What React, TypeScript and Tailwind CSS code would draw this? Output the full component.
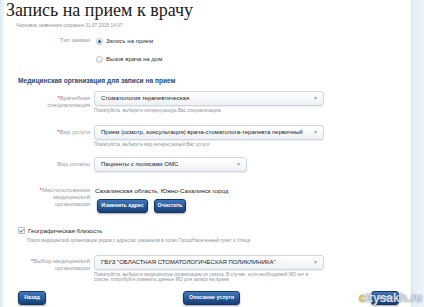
import { Check } from 'lucide-react';

const Arrow = () => (
    <span className="ml-auto pr-[5px] text-[5px] leading-none text-[#9aa3ad]">▼</span>
);

function Select({ text, width }: { text: string; width: string }) {
    return (
        <div className={`${width} h-[15px] flex items-center pl-[6px] rounded-[3px] border border-[#cfd6de] bg-gradient-to-b from-white to-[#eef1f4] shadow-[0_1px_1px_rgba(0,0,0,0.08)]`}>
            <span className="text-[6px] text-[#222] whitespace-nowrap">{text}</span>
            <Arrow />
        </div>
    );
}

function Btn({ label, className = '' }: { label: string; className?: string }) {
    return (
        <div className={`h-[14px] flex items-center justify-center rounded-[3px] bg-gradient-to-b from-[#3f78bb] to-[#173f77] border border-[#143766] shadow-[0_1px_2px_rgba(0,0,0,0.35)] text-white font-bold text-[5.3px] ${className}`}>
            {label}
        </div>
    );
}

function Label({ lines, req }: { lines: string[]; req?: boolean }) {
    return (
        <div className="w-[86px] shrink-0 text-right text-[6px] leading-[7px] text-[#959aa1]">
            {lines.map((l, i) => (
                <div key={i}>
                    {i === 0 && req && <span className="text-[#d0343c]">*</span>}
                    {l}
                </div>
            ))}
        </div>
    );
}

const Hint = ({ children }: { children: React.ReactNode }) => (
    <p className="text-[4.6px] leading-[5.5px] text-[#8d949c] mt-[2px]">{children}</p>
);

export default function App() {
    return (
        <div className="w-[424px] h-[307px] overflow-hidden flex bg-white font-['Liberation_Sans',Arial,sans-serif] relative">
            {/* left strip */}
            <div className="w-[4px] shrink-0 bg-gradient-to-r from-[#dbe8f5] to-[#f3f8fc]" />

            {/* main panel */}
            <main className="w-[407px] shrink-0 bg-white">
                <h1 className="pl-[2px] text-[18px] leading-[20px] text-[#222] [font-family:'Liberation_Serif',serif]">Запись на прием к врачу</h1>
                <p className="mt-[2px] pl-[12px] text-[4.8px] text-[#8d949c]">Черновик заявления сохранен 31.07.2015 14:07</p>

                {/* Тип заявки */}
                <div className="mt-[8px] flex">
                    <Label lines={['Тип заявки']} />
                    <div className="ml-[6px] flex flex-col gap-[9px]">
                        <div className="flex items-center gap-[3px]">
                            <span className="w-[7px] h-[7px] rounded-full border border-[#b9c2cc] bg-gradient-to-b from-white to-[#e4e9ee] flex items-center justify-center">
                                <span className="w-[3px] h-[3px] rounded-full bg-[#2c5d95]" />
                            </span>
                            <span className="text-[6px] text-[#333]">Запись на прием</span>
                        </div>
                        <div className="flex items-center gap-[3px]">
                            <span className="w-[7px] h-[7px] rounded-full border border-[#b9c2cc] bg-gradient-to-b from-white to-[#e4e9ee]" />
                            <span className="text-[6px] text-[#333]">Вызов врача на дом</span>
                        </div>
                    </div>
                </div>

                <h2 className="mt-[12px] pl-[14px] text-[6.6px] font-bold text-[#1f4a7c]">Медицинская организация для записи на прием</h2>

                {/* Врачебная специализация */}
                <div className="mt-[5px] flex">
                    <div className="pt-[4px]"><Label lines={['Врачебная', 'специализация']} req /></div>
                    <div className="ml-[4px]">
                        <Select text="Стоматология терапевтическая" width="w-[230px]" />
                        <Hint>Пожалуйста, выберите интересующую Вас специализацию</Hint>
                    </div>
                </div>

                {/* Вид услуги */}
                <div className="mt-[11px] flex">
                    <div className="pt-[4px]"><Label lines={['Вид услуги']} req /></div>
                    <div className="ml-[4px]">
                        <Select text="Прием (осмотр, консультация) врача-стоматолога-терапевта первичный" width="w-[230px]" />
                        <Hint>Пожалуйста, выберите вид интересующей Вас услуги</Hint>
                    </div>
                </div>

                {/* Вид оплаты */}
                <div className="mt-[10px] flex">
                    <div className="pt-[4px]"><Label lines={['Вид оплаты']} /></div>
                    <div className="ml-[4px]">
                        <Select text="Пациенты с полисами ОМС" width="w-[153px]" />
                    </div>
                </div>

                {/* Местоположение */}
                <div className="mt-[15px] flex">
                    <Label lines={['Местоположение', 'медицинской', 'организации']} req />
                    <div className="ml-[5px]">
                        <p className="text-[6.2px] leading-[7px] text-[#222]">Сахалинская область, Южно-Сахалинск город</p>
                        <div className="mt-[5px] ml-[2px] flex gap-[6px]">
                            <Btn label="Изменить адрес" className="w-[51px]" />
                            <Btn label="Очистить" className="w-[32px]" />
                        </div>
                    </div>
                </div>

                {/* Географическая близость */}
                <div className="mt-[13px] pl-[14px]">
                    <div className="flex items-center gap-[3px]">
                        <span className="w-[7px] h-[7px] rounded-[1px] border border-[#b9c2cc] bg-gradient-to-b from-white to-[#e4e9ee] flex items-center justify-center">
                            <Check className="w-[6px] h-[6px] text-[#1f4a7c]" strokeWidth={4} />
                        </span>
                        <span className="text-[6.2px] text-[#222]">Географическая близость</span>
                    </div>
                    <p className="mt-[3px] pl-[9px] text-[4.6px] text-[#8d949c]">Поиск медицинской организации рядом с адресом, указанном в полях Город/Населенный пункт и Улица</p>
                </div>

                {/* Выбор МО */}
                <div className="mt-[10px] flex">
                    <div className="pt-[3px]"><Label lines={['Выбор медицинской', 'организации']} req /></div>
                    <div className="ml-[4px]">
                        <Select text='ГБУЗ "ОБЛАСТНАЯ СТОМАТОЛОГИЧЕСКАЯ ПОЛИКЛИНИКА"' width="w-[230px]" />
                        <p className="text-[4.6px] leading-[5px] text-[#8d949c] mt-[2px] w-[230px]">Пожалуйста, выберите медицинскую организацию из списка. В случае, если необходимой МО нет в списке, попробуйте изменить данные МО для записи на прием</p>
                    </div>
                </div>

                {/* bottom buttons */}
                <div className="mt-[9px] flex items-center pl-[14px] pr-[12px]">
                    <Btn label="Назад" className="w-[28px]" />
                    <Btn label="Описание услуги" className="w-[57px] ml-[137px]" />
                    <Btn label="Далее" className="w-[28px] ml-auto" />
                </div>
            </main>

            {/* right strip */}
            <div className="flex-1 border-l border-[#d6e3f0] bg-gradient-to-r from-[#e4eef8] to-[#edf4fb]" />

            {/* watermark */}
            <div className="absolute left-[359px] top-[289px] flex items-center text-[12px] font-bold text-[#d4dde8] [text-shadow:0_0_2px_rgba(60,80,110,0.8)]">
                <span className="text-[#e6c84a]">c</span>itysakh.ru
            </div>
        </div>
    );
}
